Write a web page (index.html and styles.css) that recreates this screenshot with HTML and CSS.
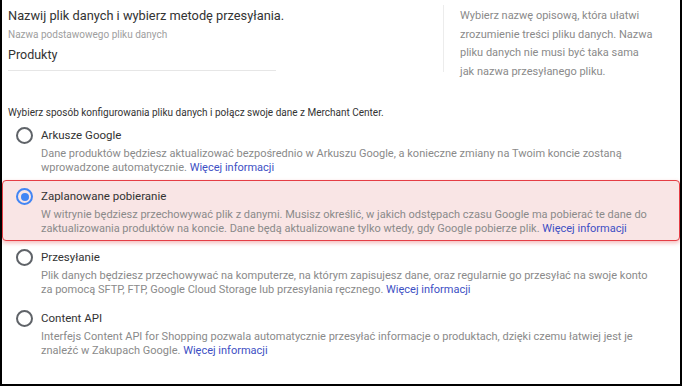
FILE: index.html
```html
<!DOCTYPE html>
<html>
<head>
    <meta charset="utf-8">
    <link rel="stylesheet" href="styles.css">
</head>
<body>
    <div class="frame">
        <div class="top">
            <div class="name-col">
                <h2>Nazwij plik danych i wybierz metodę przesyłania.</h2>
                <label class="field-label">Nazwa podstawowego pliku danych</label>
                <div class="field-value">Produkty</div>
            </div>
            <div class="help-col">
                Wybierz nazwę opisową, która ułatwi<br>
                zrozumienie treści pliku danych. Nazwa<br>
                pliku danych nie musi być taka sama<br>
                jak nazwa przesyłanego pliku.
            </div>
        </div>

        <p class="intro">Wybierz sposób konfigurowania pliku danych i połącz swoje dane z Merchant Center.</p>

        <div class="options">
            <div class="option">
                <span class="radio"></span>
                <div class="option-body">
                    <div class="option-title">Arkusze Google</div>
                    <div class="option-desc">Dane produktów będziesz aktualizować bezpośrednio w Arkuszu Google, a konieczne zmiany na Twoim koncie zostaną wprowadzone automatycznie. <a href="#">Więcej informacji</a></div>
                </div>
            </div>
            <div class="option selected">
                <span class="radio checked"></span>
                <div class="option-body">
                    <div class="option-title">Zaplanowane pobieranie</div>
                    <div class="option-desc">W witrynie będziesz przechowywać plik z danymi. Musisz określić, w jakich odstępach czasu Google ma pobierać te dane do zaktualizowania produktów na koncie. Dane będą aktualizowane tylko wtedy, gdy Google pobierze plik. <a href="#">Więcej informacji</a></div>
                </div>
            </div>
            <div class="option">
                <span class="radio"></span>
                <div class="option-body">
                    <div class="option-title">Przesyłanie</div>
                    <div class="option-desc">Plik danych będziesz przechowywać na komputerze, na którym zapisujesz dane, oraz regularnie go przesyłać na swoje konto za pomocą SFTP, FTP, Google Cloud Storage lub przesyłania ręcznego. <a href="#">Więcej informacji</a></div>
                </div>
            </div>
            <div class="option">
                <span class="radio"></span>
                <div class="option-body">
                    <div class="option-title">Content API</div>
                    <div class="option-desc">Interfejs Content API for Shopping pozwala automatycznie przesyłać informacje o produktach, dzięki czemu łatwiej jest je znaleźć w Zakupach Google. <a href="#">Więcej informacji</a></div>
                </div>
            </div>
        </div>
    </div>
</body>
</html>
```

FILE: styles.css
```css
  body {
      margin: 0;
      padding: 0;
      background-color: #fff;
      font-family: Roboto, "Noto Sans", Arial, sans-serif;
  }
  .frame {
      width: 682px;
      height: 386px;
      box-sizing: border-box;
      border: 2px solid #000;
      border-top: none;
      overflow: hidden;
  }
  .top {
      display: flex;
      align-items: flex-start;
      padding: 5px 0 0 6px;
  }
  .name-col {
      width: 268px;
  }
  h2 {
      margin: 2px 0 0 0;
      font-size: 12.8px;
      line-height: 18px;
      font-weight: normal;
      color: #333;
      white-space: nowrap;
  }
  .field-label {
      display: block;
      margin-top: 3px;
      font-size: 10px;
      line-height: 14px;
      color: #9e9e9e;
  }
  .field-value {
      margin-top: 4px;
      padding-bottom: 6px;
      font-size: 12.5px;
      line-height: 18px;
      color: #333;
      border-bottom: 1px solid #e6e6e6;
  }
  .help-col {
      margin-left: auto;
      width: 190px;
      height: 65px;
      padding: 2px 30px 0 16px;
      border-left: 1px solid #ececec;
      font-size: 11px;
      line-height: 18.5px;
      color: #8a8a8a;
      white-space: nowrap;
  }
  .intro {
      margin: 34px 0 0 6px;
      font-size: 10px;
      line-height: 13px;
      color: #333;
  }
  .option {
      display: flex;
      align-items: flex-start;
      padding: 7px 30px 4px 13px;
      border: 1px solid transparent;
      border-radius: 4px;
  }
  .option.selected {
      background-color: #f9e5e5;
      border-color: #e53e45;
      box-shadow: 0 2px 4px rgba(220, 60, 60, 0.35);
  }
  .radio {
      flex: 0 0 auto;
      width: 13px;
      height: 13px;
      border: 2px solid #5f6368;
      border-radius: 50%;
      position: relative;
  }
  .radio.checked {
      border-color: #4285f4;
  }
  .radio.checked::after {
      content: "";
      position: absolute;
      left: 2.5px;
      top: 2.5px;
      width: 8px;
      height: 8px;
      border-radius: 50%;
      background-color: #4285f4;
  }
  .option-body {
      margin-left: 8px;
  }
  .option-title {
      font-size: 11.5px;
      line-height: 16px;
      color: #333;
  }
  .option-desc {
      margin-top: 4px;
      font-size: 11px;
      line-height: 14px;
      color: #8a8a8a;
  }
  .option-desc a {
      color: #3d4fc4;
      text-decoration: none;
  }
```
